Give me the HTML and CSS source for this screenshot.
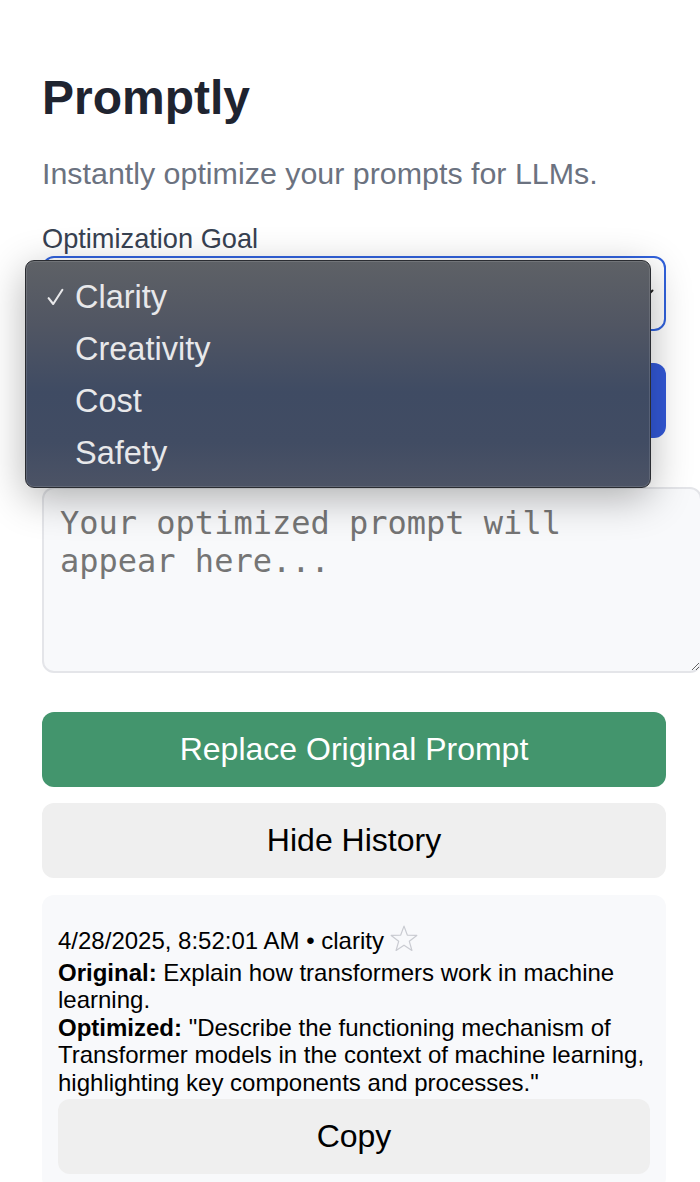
FILE: index.html
```html
<!DOCTYPE html>
<html lang="en">
<head>
<meta charset="utf-8">
<title>Promptly</title>
<link rel="stylesheet" href="styles.css">
</head>
<body>
<div class="app">
  <h1 class="title">Promptly</h1>
  <p class="subtitle">Instantly optimize your prompts for LLMs.</p>
  <label class="label">Optimization Goal</label>
  <div class="select-wrap">
    <div class="select">
      <span class="select-value">Clarity</span>
      <svg class="chevron" width="16" height="10" viewBox="0 0 16 10"><polyline points="1.5,1.5 8,8 14.5,1.5" fill="none" stroke="#222" stroke-width="2" stroke-linecap="round" stroke-linejoin="round"/></svg>
    </div>
    <div class="menu">
      <div class="menu-item"><span class="check"><svg width="17" height="18" viewBox="0 0 17 18"><polyline points="1.6,10.2 6.2,16 15.4,1.8" fill="none" stroke="#e8e8ea" stroke-width="2.1" stroke-linecap="round" stroke-linejoin="round"/></svg></span>Clarity</div>
      <div class="menu-item"><span class="check"></span>Creativity</div>
      <div class="menu-item"><span class="check"></span>Cost</div>
      <div class="menu-item"><span class="check"></span>Safety</div>
    </div>
  </div>
  <button class="btn btn-primary">Optimize Prompt</button>
  <textarea class="output" placeholder="Your optimized prompt will appear here..." readonly></textarea>
  <button class="btn btn-success">Replace Original Prompt</button>
  <button class="btn btn-secondary">Hide History</button>
  <div class="history">
    <div class="entry">
      <div class="meta">4/28/2025, 8:52:01 AM • clarity<svg class="star" width="28" height="27" viewBox="0 0 26 25"><polygon points="13,1 16.06,9.29 24.89,9.64 17.95,15.11 20.35,23.61 13,18.7 5.65,23.61 8.05,15.11 1.11,9.64 9.94,9.29" fill="none" stroke="#c9cbd1" stroke-width="1.1" stroke-linejoin="round"/></svg></div>
      <div class="line"><strong>Original:</strong> Explain how transformers work in machine learning.</div>
      <div class="line"><strong>Optimized:</strong> "Describe the functioning mechanism of Transformer models in the context of machine learning, highlighting key components and processes."</div>
      <button class="btn btn-secondary btn-copy">Copy</button>
    </div>
  </div>
</div>
</body>
</html>
```
FILE: styles.css
```css
html {
  scrollbar-width: none;
}
html::-webkit-scrollbar,
body::-webkit-scrollbar {
  display: none;
}
body {
  margin: 0;
  background: #ffffff;
  font-family: "Liberation Sans", Arial, Helvetica, sans-serif;
  overflow-x: hidden;
}

.app {
  display: flex;
  flex-direction: column;
  width: 624px;
  padding: 70px 0 40px 42px;
}

.title {
  margin: 0;
  font-size: 48px;
  line-height: 56px;
  font-weight: 700;
  color: #1f2430;
}

.subtitle {
  margin: 30px 0 0;
  font-size: 30.4px;
  line-height: 35px;
  color: #6b7280;
}

.label {
  margin-top: 32px;
  font-size: 27.2px;
  line-height: 31px;
  color: #374151;
}

.select-wrap {
  position: relative;
  margin-top: 2px;
}

.select {
  box-sizing: border-box;
  height: 75px;
  display: flex;
  align-items: center;
  justify-content: space-between;
  padding: 0 10px 0 16px;
  border: 2px solid #3162dd;
  border-radius: 12px;
  background: #fff;
  font-size: 32px;
  color: #111;
}

.select-value {
  visibility: hidden;
}

.menu {
  position: absolute;
  left: -17px;
  top: 4px;
  width: 626px;
  height: 228px;
  box-sizing: border-box;
  padding: 10px 0 9px;
  border: 1px solid #2a2c31;
  border-radius: 9px;
  background: linear-gradient(to bottom, #5e6166 0%, #515663 28%, #3f4b63 58%, #414c63 80%, #4c5365 100%);
  box-shadow: inset 0 0 0 1px rgba(255, 255, 255, 0.12), 0 10px 40px rgba(0, 0, 0, 0.3);
  z-index: 10;
}

.menu-item {
  display: flex;
  align-items: center;
  height: 52px;
  padding-left: 21px;
  font-size: 32.5px;
  color: #e8e8ea;
}

.check {
  display: flex;
  align-items: center;
  width: 28px;
  height: 20px;
}

.btn {
  box-sizing: border-box;
  height: 75px;
  border: none;
  border-radius: 12px;
  font-family: "Liberation Sans", Arial, Helvetica, sans-serif;
  font-size: 32px;
  line-height: 37px;
  padding: 0 16px;
  cursor: pointer;
}

.btn-primary {
  margin-top: 32px;
  background: #3359d9;
  color: #ffffff;
}

.output {
  align-self: flex-start;
  margin-top: 49px;
  width: 100%;
  height: 150px;
  box-sizing: content-box;
  padding: 16px;
  border: 2px solid #e4e5e9;
  border-radius: 12px;
  background: #f8f9fb;
  font-family: "DejaVu Sans Mono", "Liberation Mono", monospace;
  font-size: 32px;
  line-height: 37.5px;
  color: #111;
  display: block;
}

.output::placeholder {
  color: #757575;
}

.btn-success {
  margin-top: 39px;
  background: #43956d;
  color: #ffffff;
}

.btn-secondary {
  margin-top: 16px;
  background: #efefef;
  color: #000000;
}

.history {
  margin-top: 17px;
  background: #f8f9fb;
  border-radius: 12px;
  padding: 30px 16px 16px;
}

.entry {
  display: flex;
  flex-direction: column;
  font-size: 24px;
  line-height: 27.6px;
  color: #000;
}

.meta {
  margin-bottom: 4px;
}

.star {
  margin-left: 6px;
  vertical-align: -3px;
}

.btn-copy {
  margin-top: 2px;
  width: 100%;
}
```
